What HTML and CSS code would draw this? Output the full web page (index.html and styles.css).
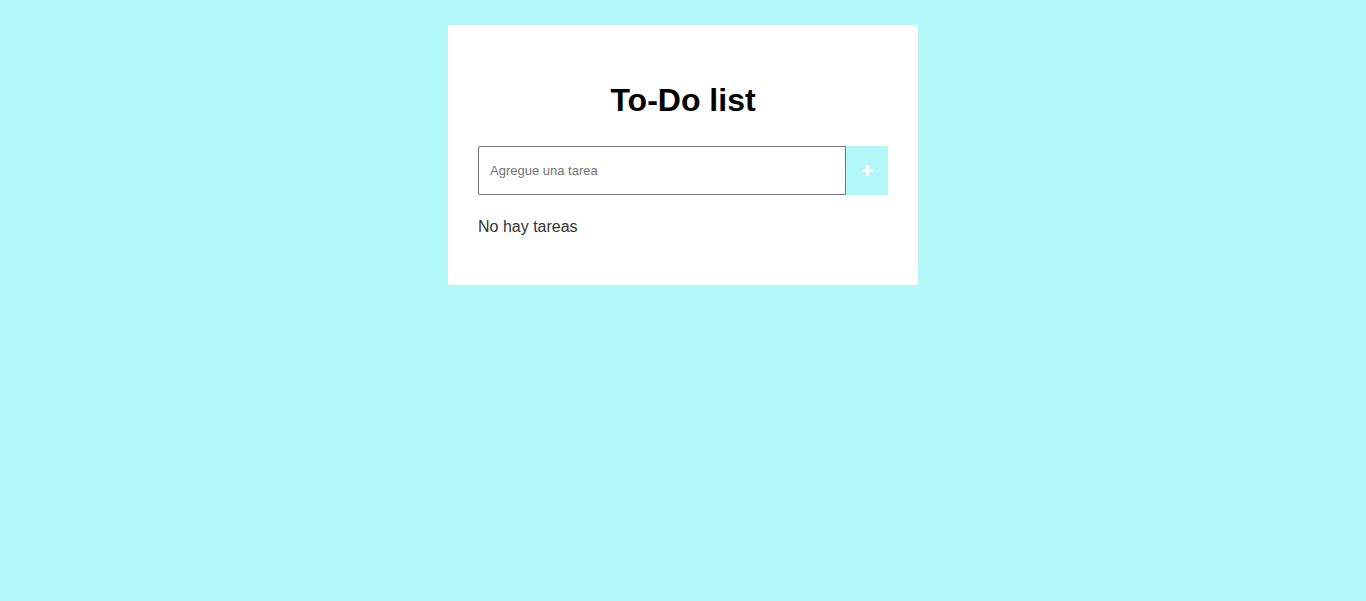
FILE: index.html
```html
<!DOCTYPE html>
<html lang="es">
<head>
<meta charset="utf-8">
<title>To-Do list</title>
<link rel="stylesheet" href="styles.css">
</head>
<body>
<main class="card">
  <h1 class="title">To-Do list</h1>
  <form class="add-form">
    <input class="task-input" type="text" placeholder="Agregue una tarea">
    <button class="add-btn" type="button" aria-label="Agregar">
      <svg width="11" height="11" viewBox="0 0 11 11"><path d="M4 0h3v4h4v3H7v4H4V7H0V4h4z" fill="#fff"/></svg>
    </button>
  </form>
  <p class="empty">No hay tareas</p>
</main>
</body>
</html>
```
FILE: styles.css
```css
html, body {
  margin: 0;
  padding: 0;
  background: #b3f8f8;
  font-family: "Liberation Sans", Arial, sans-serif;
}
body {
  display: flex;
  justify-content: center;
  padding-top: 25px;
  min-height: 100vh;
  box-sizing: border-box;
}
.card {
  width: 470px;
  height: 260px;
  box-sizing: border-box;
  background: #fff;
  padding: 30px;
  align-self: flex-start;
}
.title {
  margin: 27px 0 27px;
  font-size: 32px;
  font-weight: bold;
  text-align: center;
  color: #000;
  line-height: 37px;
}
.add-form {
  display: flex;
  height: 49px;
}
.task-input {
  flex: 1;
  height: 49px;
  box-sizing: border-box;
  border: 1px solid #767676;
  border-radius: 2px 0 0 2px;
  padding: 0 11px;
  font-family: "Liberation Sans", Arial, sans-serif;
  font-size: 13px;
  color: #333;
  outline: none;
}
.task-input::placeholder {
  color: #757575;
}
.add-btn {
  width: 42px;
  height: 49px;
  border: none;
  background: #b3f8f8;
  display: flex;
  align-items: center;
  justify-content: center;
  padding: 0;
  cursor: pointer;
}
.empty {
  margin: 23px 0 0;
  font-size: 16px;
  line-height: 18px;
  color: #333;
}
```
